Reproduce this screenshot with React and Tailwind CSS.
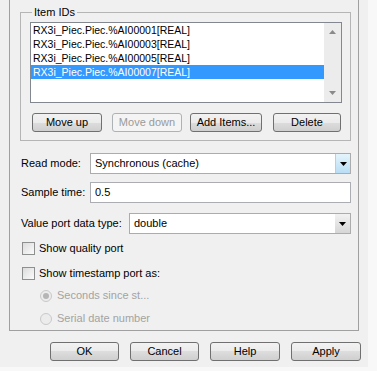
import React from 'react';

const font = { fontFamily: '"Liberation Sans", Arial, sans-serif' };

function Btn({ children, w, disabled, className = '' }) {
  return (
    <div
      className={`flex items-center justify-center h-[19px] rounded-[3px] border text-[11px] ${w} ${
        disabled
          ? 'border-[#adb2b5] bg-[#f4f4f4] text-[#9a9a9a]'
          : 'border-[#707070] bg-[linear-gradient(#f2f2f2_0%,#ebebeb_50%,#dddddd_50%,#cfcfcf_100%)] text-black'
      } ${className}`}
    >
      {children}
    </div>
  );
}

function Combo({ value, w, hot }) {
  return (
    <div className={`flex h-[21px] border border-[#acacac] bg-white ${w}`}>
      <div className="flex-1 pl-[4px] text-[11px] leading-[19px] text-black">{value}</div>
      <div
        className={`w-[15px] h-full flex items-center justify-center ${
          hot
            ? 'bg-[linear-gradient(#e5f4fc,#b8def5)] border-l border-[#a7d6f3]'
            : 'bg-[linear-gradient(#f2f2f2,#d6d6d6)]'
        }`}
      >
        <svg width="7" height="4" viewBox="0 0 7 4">
          <path d="M0 0h7L3.5 4z" fill="#000" />
        </svg>
      </div>
    </div>
  );
}

function Check({ label }) {
  return (
    <div className="flex items-center h-[13px] ml-[12px]">
      <div className="w-[13px] h-[13px] border border-[#8e8f8f] bg-[linear-gradient(135deg,#dcdcdc,#fbfbfb)]" />
      <span className="ml-[4px] text-[11px] text-black">{label}</span>
    </div>
  );
}

function Radio({ label, on, className = '' }) {
  return (
    <div className={`flex items-center h-[13px] ml-[30px] ${className}`}>
      <div className="w-[12px] h-[12px] rounded-full border border-[#c9c9c9] bg-[#ececec] flex items-center justify-center">
        {on && <div className="w-[6px] h-[6px] rounded-full bg-[#b5b5b5]" />}
      </div>
      <span className="ml-[5px] text-[11px] text-[#a3a3a3]">{label}</span>
    </div>
  );
}

const items = [
  'RX3i_Piec.Piec.%AI00001[REAL]',
  'RX3i_Piec.Piec.%AI00003[REAL]',
  'RX3i_Piec.Piec.%AI00005[REAL]',
  'RX3i_Piec.Piec.%AI00007[REAL]',
];

export default function App() {
  return (
    <div className="w-[377px] h-[371px] bg-[#f8f8f8] overflow-hidden" style={font}>
      <div className="w-[368px] h-[367px] bg-[#f0f0f0] flow-root">
        <div className="ml-[9px] w-[350px] h-[331px] pt-[12px] border-x border-b border-[#a0a0a0]">
          <div className="relative ml-[10px] w-[331px] h-[129px] border border-[#b5b5b5]">
            <div className="absolute -top-[8px] left-[11px] px-[2px] bg-[#f0f0f0] text-[11px] leading-[14px] text-black">
              Item IDs
            </div>
            <div className="ml-[9px] mt-[9px] w-[312px] h-[81px] border border-[#828790] bg-white flex">
              <div className="flex-1">
                {items.map((t, i) => (
                  <div
                    key={t}
                    className={`h-[14px] pl-[2px] text-[10.5px] leading-[14px] ${
                      i === 3 ? 'bg-[#3399ff] text-white' : 'text-black'
                    }`}
                  >
                    {t}
                  </div>
                ))}
              </div>
              <div className="w-[17px] h-full bg-[#ececec] flex flex-col justify-between items-center py-[7px]">
                <svg width="7" height="4" viewBox="0 0 7 4">
                  <path d="M0 4h7L3.5 0z" fill="#8a8a8a" />
                </svg>
                <svg width="7" height="4" viewBox="0 0 7 4">
                  <path d="M0 0h7L3.5 4z" fill="#8a8a8a" />
                </svg>
              </div>
            </div>
            <div className="flex ml-[11px] mt-[10px]">
              <Btn w="w-[70px]">Move up</Btn>
              <Btn w="w-[70px]" disabled className="ml-[10px]">Move down</Btn>
              <Btn w="w-[72px]" className="ml-[8px]">Add Items...</Btn>
              <Btn w="w-[68px]" className="ml-[11px]">Delete</Btn>
            </div>
          </div>

          <div className="flex items-center ml-[11px] mt-[12px]">
            <span className="w-[69px] text-[11px] text-black">Read mode:</span>
            <Combo value="Synchronous (cache)" w="w-[261px]" hot />
          </div>
          <div className="flex items-center ml-[11px] mt-[8px]">
            <span className="w-[69px] text-[11px] text-black">Sample time:</span>
            <div className="w-[261px] h-[21px] border border-[#abadb3] bg-white pl-[4px] text-[11px] leading-[19px] text-black">
              0.5
            </div>
          </div>
          <div className="flex items-center ml-[11px] mt-[10px]">
            <span className="w-[108px] text-[11px] text-black">Value port data type:</span>
            <Combo value="double" w="w-[222px]" />
          </div>

          <div className="mt-[8px] flex flex-col">
            <Check label="Show quality port" />
            <div className="mt-[12px]">
              <Check label="Show timestamp port as:" />
            </div>
            <Radio label="Seconds since st..." on className="mt-[9px]" />
            <Radio label="Serial date number" className="mt-[10px]" />
          </div>
        </div>

        <div className="flex ml-[50px] mt-[11px] gap-[11px]">
          <Btn w="w-[69px]">OK</Btn>
          <Btn w="w-[69px]">Cancel</Btn>
          <Btn w="w-[70px]">Help</Btn>
          <Btn w="w-[70px]">Apply</Btn>
        </div>
      </div>
    </div>
  );
}
